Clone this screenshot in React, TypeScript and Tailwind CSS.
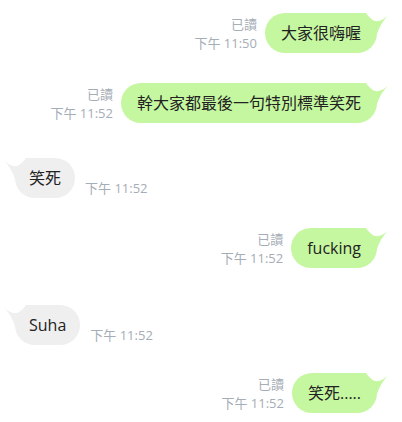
import React from "react";

type Msg = {
  side: "me" | "them";
  text: string;
  time: string;
  read?: boolean;
  gap: string;
};

const messages: Msg[] = [
  { side: "me", text: "大家很嗨喔", time: "下午 11:50", read: true, gap: "mt-[13px]" },
  { side: "me", text: "幹大家都最後一句特別標準笑死", time: "下午 11:52", read: true, gap: "mt-[30px]" },
  { side: "them", text: "笑死", time: "下午 11:52", gap: "mt-[35px]" },
  { side: "me", text: "fucking", time: "下午 11:52", read: true, gap: "mt-[30px]" },
  { side: "them", text: "Suha", time: "下午 11:52", gap: "mt-[37px]" },
  { side: "me", text: "笑死.....", time: "下午 11:52", read: true, gap: "mt-[28px]" },
];

// little curled horn on the top corner of the bubble
function Tail({ mine }: { mine: boolean }) {
  if (mine) {
    return (
      <svg className="absolute top-0 right-[-12px]" width="32" height="24" viewBox="0 0 32 24">
        <path d="M0 0 H9 Q18 15 31 2.5 Q23 11 20 21 H0 Z" fill="#c5f7a0" />
      </svg>
    );
  }
  return (
    <svg className="absolute top-0 left-[-12px]" width="32" height="24" viewBox="0 0 32 24">
      <path d="M32 0 H23 Q14 15 1 2.5 Q9 11 12 21 H32 Z" fill="#efefef" />
    </svg>
  );
}

export default function App() {
  return (
    <div
      className="w-[402px] h-[422px] bg-white overflow-hidden"
      style={{ fontFamily: '"Open Sans", "Noto Sans CJK TC", sans-serif' }}
    >
      {messages.map((m, i) =>
        m.side === "me" ? (
          <div key={i} className={`${m.gap} flex justify-end items-end pr-[25px]`}>
            <div className="mr-2 text-right text-[13px] leading-[19px] text-[#a5adb6]">
              {m.read && <div>已讀</div>}
              <div>{m.time}</div>
            </div>
            <div className="relative h-10 px-4 rounded-[20px] bg-[#c5f7a0] text-[16px] leading-10 text-[#222] whitespace-nowrap">
              <Tail mine />
              <span className="relative">{m.text}</span>
            </div>
          </div>
        ) : (
          <div key={i} className={`${m.gap} flex items-end pl-[15px]`}>
            <div className="relative h-10 px-[14px] rounded-[20px] bg-[#efefef] text-[16px] leading-10 text-[#222] whitespace-nowrap">
              <Tail mine={false} />
              <span className="relative">{m.text}</span>
            </div>
            <div className="ml-[10px] text-[13px] leading-[19px] text-[#a5adb6]">{m.time}</div>
          </div>
        )
      )}
    </div>
  );
}
